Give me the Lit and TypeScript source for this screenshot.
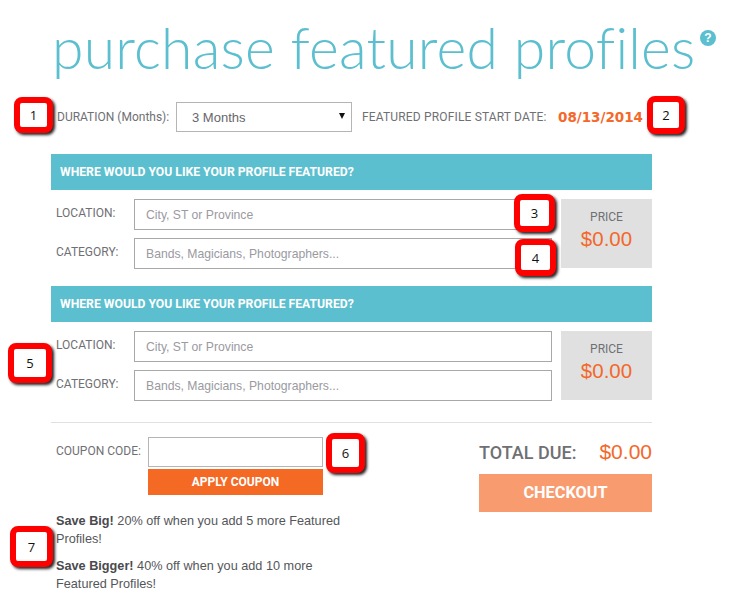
import { LitElement, html, css } from "lit";
import { customElement } from "lit/decorators.js";

const callouts = [
  { n: "1", x: 14, y: 97, w: 39, h: 36 },
  { n: "2", x: 647, y: 96, w: 38, h: 38 },
  { n: "3", x: 514, y: 194, w: 41, h: 38 },
  { n: "4", x: 515, y: 239, w: 41, h: 37 },
  { n: "5", x: 8, y: 343, w: 44, h: 40 },
  { n: "6", x: 326, y: 433, w: 39, h: 40 },
  { n: "7", x: 10, y: 526, w: 43, h: 41 },
];

@customElement("app-root")
export class AppRoot extends LitElement {
  static styles = css`
    :host {
      display: block;
      position: relative;
      width: 737px;
      height: 596px;
      overflow: hidden;
      background: #fff;
      font-family: Roboto, "Liberation Sans", Arial, sans-serif;
      color: #6f7074;
    }
    .page { width: 601px; margin-left: 51px; }
    .title-row { display: flex; align-items: flex-start; height: 102px; padding-left: 1px; }
    h1 {
      margin: 12px 0 0;
      font: 300 57px/70px Lato, sans-serif;
      letter-spacing: 0.22px;
      color: #5bbfcf;
      white-space: nowrap;
    }
    .help {
      position: absolute;
      left: 700px;
      top: 30px;
      width: 16px;
      height: 16px;
      border-radius: 50%;
      background: #5bbfcf;
      color: #fff;
      font: 700 12px/16px "Liberation Sans", sans-serif;
      text-align: center;
    }
    .top { display: flex; align-items: center; height: 30px; padding-left: 6px; margin-bottom: 22px; font-size: 12px; }
    .dur { width: 119px; white-space: nowrap; }
    .select-wrap { position: relative; width: 176px; height: 30px; margin-right: 10px; }
    select {
      appearance: none;
      width: 100%;
      height: 100%;
      box-sizing: border-box;
      border: 1px solid #b5b5b5;
      border-radius: 0;
      background: #fff;
      padding: 0 0 0 15px;
      font: 13px "Liberation Sans", sans-serif;
      color: #66666b;
    }
    .select-wrap::after {
      content: "";
      position: absolute;
      right: 7px;
      top: 11px;
      border-left: 3px solid transparent;
      border-right: 3px solid transparent;
      border-top: 6px solid #111;
    }
    .start { width: 196px; white-space: nowrap; letter-spacing: 0.16px; }
    .date { font: 700 13.5px "DejaVu Sans", sans-serif; color: #f4682a; white-space: nowrap; }
    .banner {
      height: 36px;
      box-sizing: border-box;
      padding-left: 9px;
      background: #5bbfcf;
      color: #fff;
      font-size: 12.2px;
      font-weight: 700;
      line-height: 37px;
    }
    .group { display: flex; justify-content: space-between; padding: 9px 0 17px 5px; }
    .fields { display: flex; flex-direction: column; gap: 8px; }
    .field { display: flex; align-items: flex-start; }
    .field label { width: 78px; font-size: 12px; line-height: 14px; padding-top: 7px; white-space: nowrap; }
    input {
      box-sizing: border-box;
      border: 1px solid #a8a8a8;
      border-radius: 0;
      background: #fff;
      outline: none;
      margin: 0;
    }
    .field input {
      width: 418px;
      height: 31px;
      padding: 0 11px;
      font: 12.2px "Liberation Sans", sans-serif;
    }
    input::placeholder { color: #9a9a9f; opacity: 1; }
    .price {
      width: 91px;
      height: 69px;
      background: #e0e0e0;
      text-align: center;
      box-sizing: border-box;
      padding-top: 11px;
    }
    .price div:first-child { font-size: 12px; line-height: 14px; }
    .price div:last-child { font: 20.5px/22px "Liberation Sans", sans-serif; margin-top: 4px; color: #f4682a; }
    .group.last { padding-bottom: 21px; }
    hr { margin: 0; border: 0; border-top: 1px solid #e0e0e0; }
    .bottom { display: flex; justify-content: space-between; padding: 14px 0 0 5px; }
    .left { width: 292px; }
    .coupon { display: grid; grid-template-columns: 92px 175px; row-gap: 2px; }
    .coupon label { font-size: 12px; line-height: 14px; padding-top: 7px; white-space: nowrap; }
    .coupon input { width: 175px; height: 30px; border-color: #b5b5b5; }
    .apply {
      grid-column: 2;
      height: 26px;
      background: #f46a25;
      color: #fff;
      font-size: 12px;
      font-weight: 700;
      line-height: 26px;
      text-align: center;
    }
    .save { margin: 17px 0 0; font: 12.7px/18px "Liberation Sans", sans-serif; color: #55565a; }
    .save + .save { margin-top: 9px; }
    .save b { color: #4a4a4e; }
    .right { width: 173px; padding-top: 3px; }
    .total { display: flex; justify-content: space-between; align-items: center; height: 24px; font-size: 18px; font-weight: 500; }
    .total span:last-child { font: 21px "Liberation Sans", sans-serif; color: #f4682a; }
    .checkout {
      margin-top: 10px;
      height: 38px;
      background: #f89c70;
      color: #fff;
      font-size: 16.3px;
      font-weight: 700;
      line-height: 37px;
      text-align: center;
    }
    .callout {
      position: absolute;
      box-sizing: border-box;
      display: flex;
      align-items: center;
      justify-content: center;
      background: #fff;
      border: 6px solid #f00;
      border-radius: 8px;
      box-shadow: 2px 2px 3px #222;
      color: #111;
      font: 13px "Open Sans", sans-serif;
    }
  `;

  private group(last = false) {
    return html`
      <div class="banner">WHERE WOULD YOU LIKE YOUR PROFILE FEATURED?</div>
      <div class="group ${last ? "last" : ""}">
        <div class="fields">
          <div class="field"><label>LOCATION:</label><input placeholder="City, ST or Province" /></div>
          <div class="field"><label>CATEGORY:</label><input placeholder="Bands, Magicians, Photographers..." /></div>
        </div>
        <div class="price"><div>PRICE</div><div>$0.00</div></div>
      </div>
    `;
  }

  render() {
    return html`
      <div class="page">
        <div class="title-row"><h1>purchase featured profiles</h1></div>
        <div class="top">
          <span class="dur">DURATION (Months):</span>
          <div class="select-wrap"><select><option>3 Months</option></select></div>
          <span class="start">FEATURED PROFILE START DATE:</span>
          <span class="date">08/13/2014</span>
        </div>
        ${this.group()} ${this.group(true)}
        <hr />
        <div class="bottom">
          <div class="left">
            <div class="coupon">
              <label>COUPON CODE:</label><input />
              <div class="apply">APPLY COUPON</div>
            </div>
            <p class="save"><b>Save Big!</b> 20% off when you add 5 more Featured Profiles!</p>
            <p class="save"><b>Save Bigger!</b> 40% off when you add 10 more Featured Profiles!</p>
          </div>
          <div class="right">
            <div class="total"><span>TOTAL DUE:</span><span>$0.00</span></div>
            <div class="checkout">CHECKOUT</div>
          </div>
        </div>
      </div>
      <div class="help">?</div>
      ${callouts.map(
        (c) => html`<div class="callout" style="left:${c.x}px;top:${c.y}px;width:${c.w}px;height:${c.h}px">${c.n}</div>`
      )}
    `;
  }
}
